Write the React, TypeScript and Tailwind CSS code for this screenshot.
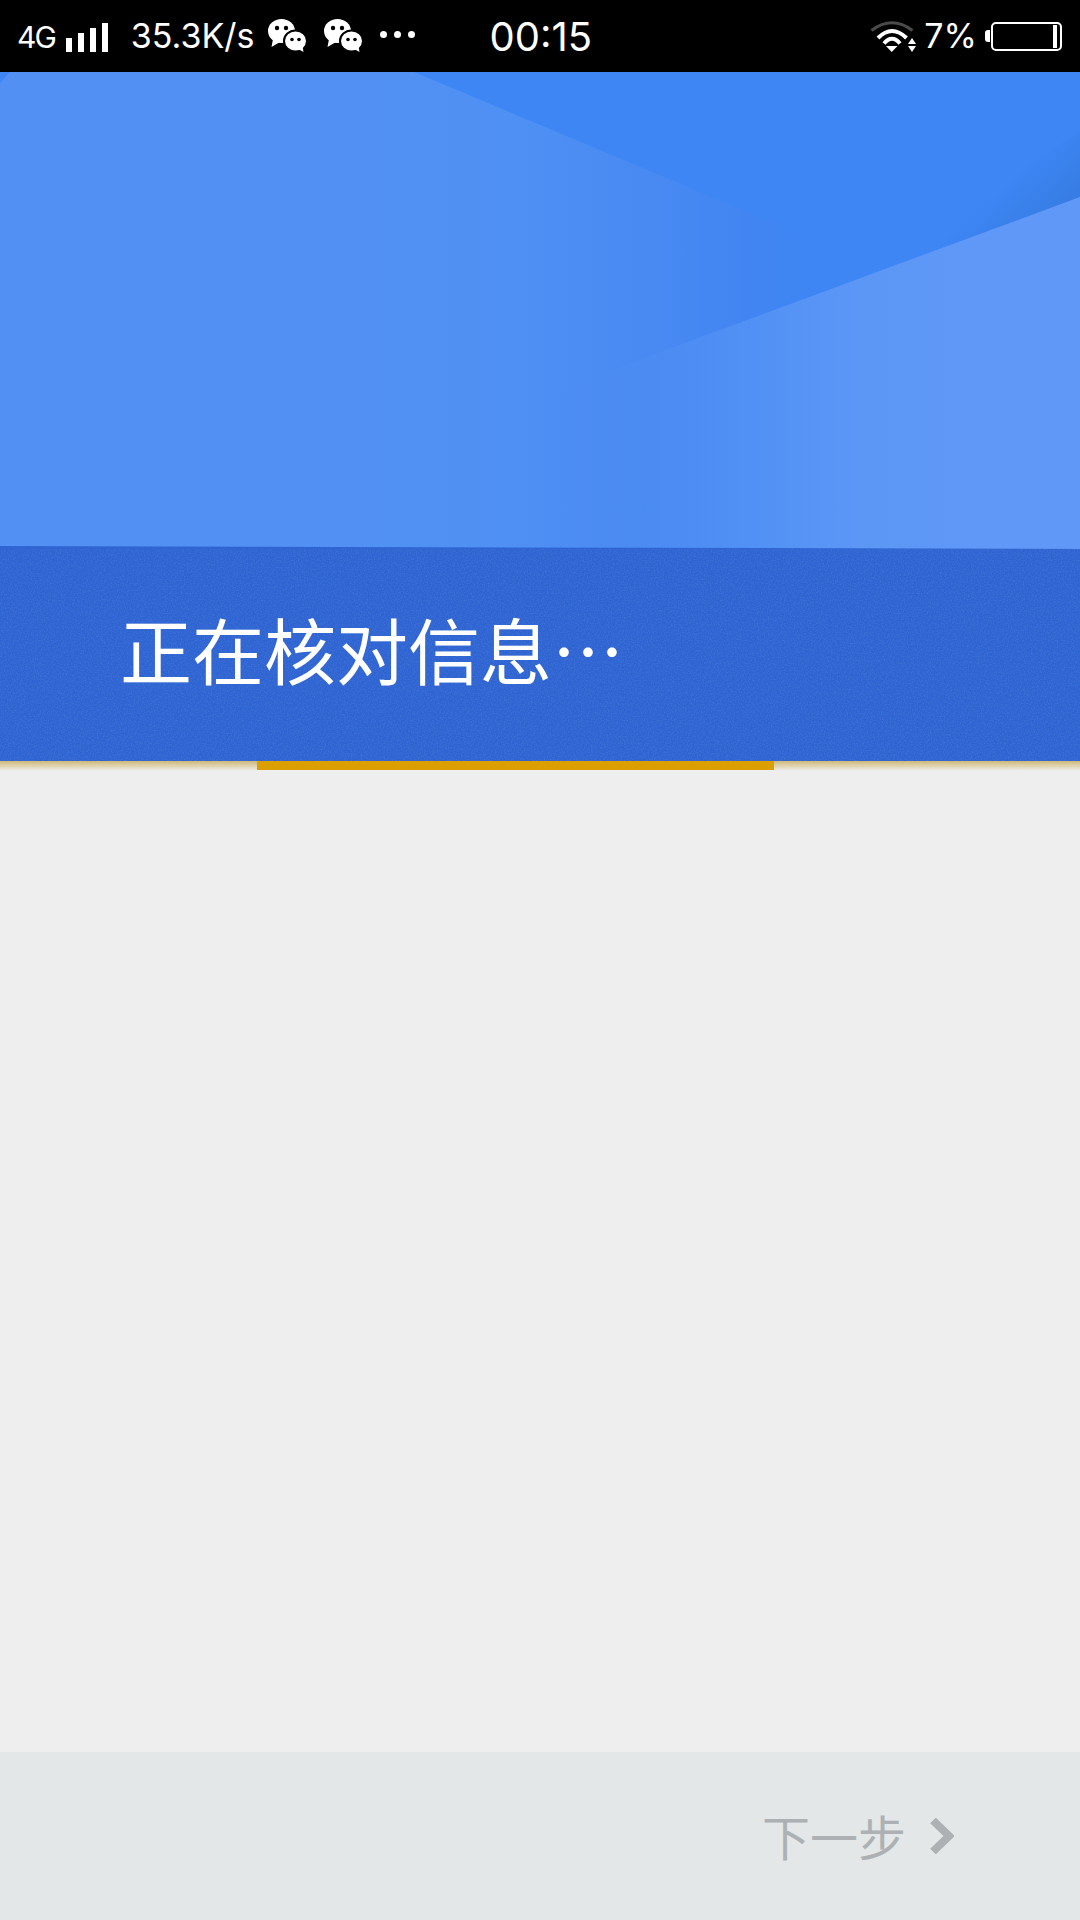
const sans = "font-['Inter','Noto_Sans_CJK_SC',sans-serif]";
const cjk = "font-['Noto_Sans_CJK_SC',sans-serif]";

function SignalBars() {
  return (
    <div className="flex items-end gap-[6px] h-[29px] ml-[11px]">
      <div className="w-[6px] h-[14px] bg-white" />
      <div className="w-[6px] h-[19px] bg-white" />
      <div className="w-[6px] h-[24px] bg-white" />
      <div className="w-[6px] h-[29px] bg-white" />
    </div>
  );
}

function WechatIcon({ className }: { className?: string }) {
  return (
    <svg viewBox="0 0 38 33" width="38" height="33" className={className}>
      <ellipse cx="13.5" cy="12" rx="13.5" ry="12" fill="#fff" />
      <path d="M5 20 L3.5 28 L12 23 Z" fill="#fff" />
      <circle cx="9" cy="9" r="2.2" fill="#000" />
      <circle cx="18" cy="9" r="2.2" fill="#000" />
      <ellipse cx="27.5" cy="22" rx="11.5" ry="10.5" fill="#fff" stroke="#000" strokeWidth="2" />
      <path d="M30 30 L35.5 33 L34.5 27 Z" fill="#fff" />
      <circle cx="24" cy="20.5" r="1.8" fill="#000" />
      <circle cx="31" cy="20.5" r="1.8" fill="#000" />
    </svg>
  );
}

function WifiIcon() {
  return (
    <svg viewBox="0 0 46 32" width="46" height="32" fill="none">
      <path d="M1.5 10.5 Q22 -5 42.5 10.5" stroke="#4a4a4a" strokeWidth="3" />
      <path d="M8 18 Q22 4 36.5 18" stroke="#fff" strokeWidth="4" />
      <path d="M14 23.5 Q22 14 30 23.5" stroke="#fff" strokeWidth="4" />
      <path d="M16 26 L27.5 26 L21.7 32 Z" fill="#fff" />
      <path d="M42 18 L38 24 L46 24 Z" fill="#fff" />
      <path d="M38 26 L46 26 L42 32 Z" fill="#fff" />
    </svg>
  );
}

function Battery() {
  return (
    <div className="flex items-center">
      <div className="w-[5px] h-[12px] bg-white rounded-l-[3px] mr-[1px]" />
      <div className="w-[71px] h-[29px] border-2 border-white rounded-[5px] flex justify-end items-stretch py-[1px] pr-[3px]">
        <div className="w-[4px] bg-white" />
      </div>
    </div>
  );
}

function StatusBar() {
  return (
    <div className="h-[72px] bg-black text-white flex items-center shrink-0">
      <div className="flex items-end ml-[17px] mt-[3px]">
        <span className="text-[30px] leading-[29px] tracking-[-2px]">4G</span>
        <SignalBars />
      </div>
      <span className="text-[34px] leading-none ml-[23px]">35.3K/s</span>
      <WechatIcon className="ml-[14px] -mt-[2px]" />
      <WechatIcon className="ml-[18px] -mt-[2px]" />
      <div className="flex gap-[7px] ml-[18px] -mt-[3px]">
        <div className="size-[7px] rounded-full bg-white" />
        <div className="size-[7px] rounded-full bg-white" />
        <div className="size-[7px] rounded-full bg-white" />
      </div>
      <span className="text-[40px] leading-none ml-[74px] mt-[1px]">00:15</span>
      <div className="ml-auto flex items-center mr-[18px]">
        <WifiIcon />
        <span className="text-[34px] leading-none ml-[8px]">7%</span>
        <div className="ml-[8px]">
          <Battery />
        </div>
      </div>
    </div>
  );
}

function HeroArt() {
  return (
    <svg viewBox="0 0 1080 477" preserveAspectRatio="none" className="size-full block">
      <defs>
        <linearGradient id="leftFade" gradientUnits="userSpaceOnUse" x1="360" y1="0" x2="860" y2="0">
          <stop offset="0" stopColor="#5291f3" />
          <stop offset="0.3" stopColor="#4f90f4" />
          <stop offset="0.6" stopColor="#4889f2" />
          <stop offset="0.78" stopColor="#4285f2" />
          <stop offset="1" stopColor="#3d86f4" stopOpacity="0" />
        </linearGradient>
        <linearGradient id="rightFade" gradientUnits="userSpaceOnUse" x1="560" y1="0" x2="960" y2="0">
          <stop offset="0" stopColor="#4a8af2" stopOpacity="0" />
          <stop offset="0.35" stopColor="#4f8ff4" stopOpacity="0.85" />
          <stop offset="0.75" stopColor="#5c97f6" />
          <stop offset="1" stopColor="#5f98f6" />
        </linearGradient>
        <linearGradient id="edgeShade" gradientUnits="userSpaceOnUse" x1="1040" y1="80" x2="1085" y2="130">
          <stop offset="0" stopColor="#3478dc" stopOpacity="0" />
          <stop offset="1" stopColor="#3478dc" stopOpacity="0.8" />
        </linearGradient>
      </defs>
      <rect width="1080" height="477" fill="#3d86f4" />
      <path d="M1080 60 L1080 125 L780 240 Z" fill="url(#edgeShade)" />
      <path d="M10 0 L414 0 L860 187 L860 477 L0 477 L0 11 Z" fill="url(#leftFade)" />
      <path d="M1080 125 L552 320 L552 477 L1080 477 Z" fill="url(#rightFade)" />
      <path d="M0 474 L1080 477 L0 477 Z" fill="#2f65d2" />
    </svg>
  );
}

function NoiseOverlay() {
  return (
    <svg className="absolute inset-0 size-full opacity-[0.1]">
      <filter id="grain">
        <feTurbulence type="fractalNoise" baseFrequency="0.7" numOctaves="2" />
        <feColorMatrix values="0 0 0 0 1  0 0 0 0 1  0 0 0 0 1  0 0 0 1.6 -0.6" />
      </filter>
      <rect width="100%" height="100%" filter="url(#grain)" />
    </svg>
  );
}

export default function App() {
  return (
    <div className={`w-[1080px] h-[1920px] flex flex-col overflow-hidden bg-[#eeeeef] ${sans}`}>
      <StatusBar />

      <div className="h-[477px] shrink-0">
        <HeroArt />
      </div>

      <div className="relative h-[212px] shrink-0 bg-[#2e64d2] flex items-center pl-[120px]">
        <NoiseOverlay />
        <h1 className={`relative text-[72px] leading-none text-white -mt-[15px] ${cjk}`}>
          正在核对信息…
        </h1>
      </div>

      <div className="h-[9px] shrink-0 bg-gradient-to-b from-[#cfb877] to-[#ece9df]">
        <div className="ml-[257px] w-[517px] h-full bg-[#dba000]" />
      </div>

      <main className="flex-1" />

      <footer className="h-[168px] shrink-0 bg-[#e3e7e8] flex items-center pl-[762px]">
        <span className={`text-[48px] leading-none text-[#adb1b3] -mt-[2px] ${cjk}`}>
          下一步
        </span>
        <svg viewBox="0 0 24 36" width="24" height="36" fill="none" className="ml-[24px]">
          <path d="M3 2.5 L19 18 L3 33.5" stroke="#adb1b3" strokeWidth="8" />
        </svg>
      </footer>
    </div>
  );
}
